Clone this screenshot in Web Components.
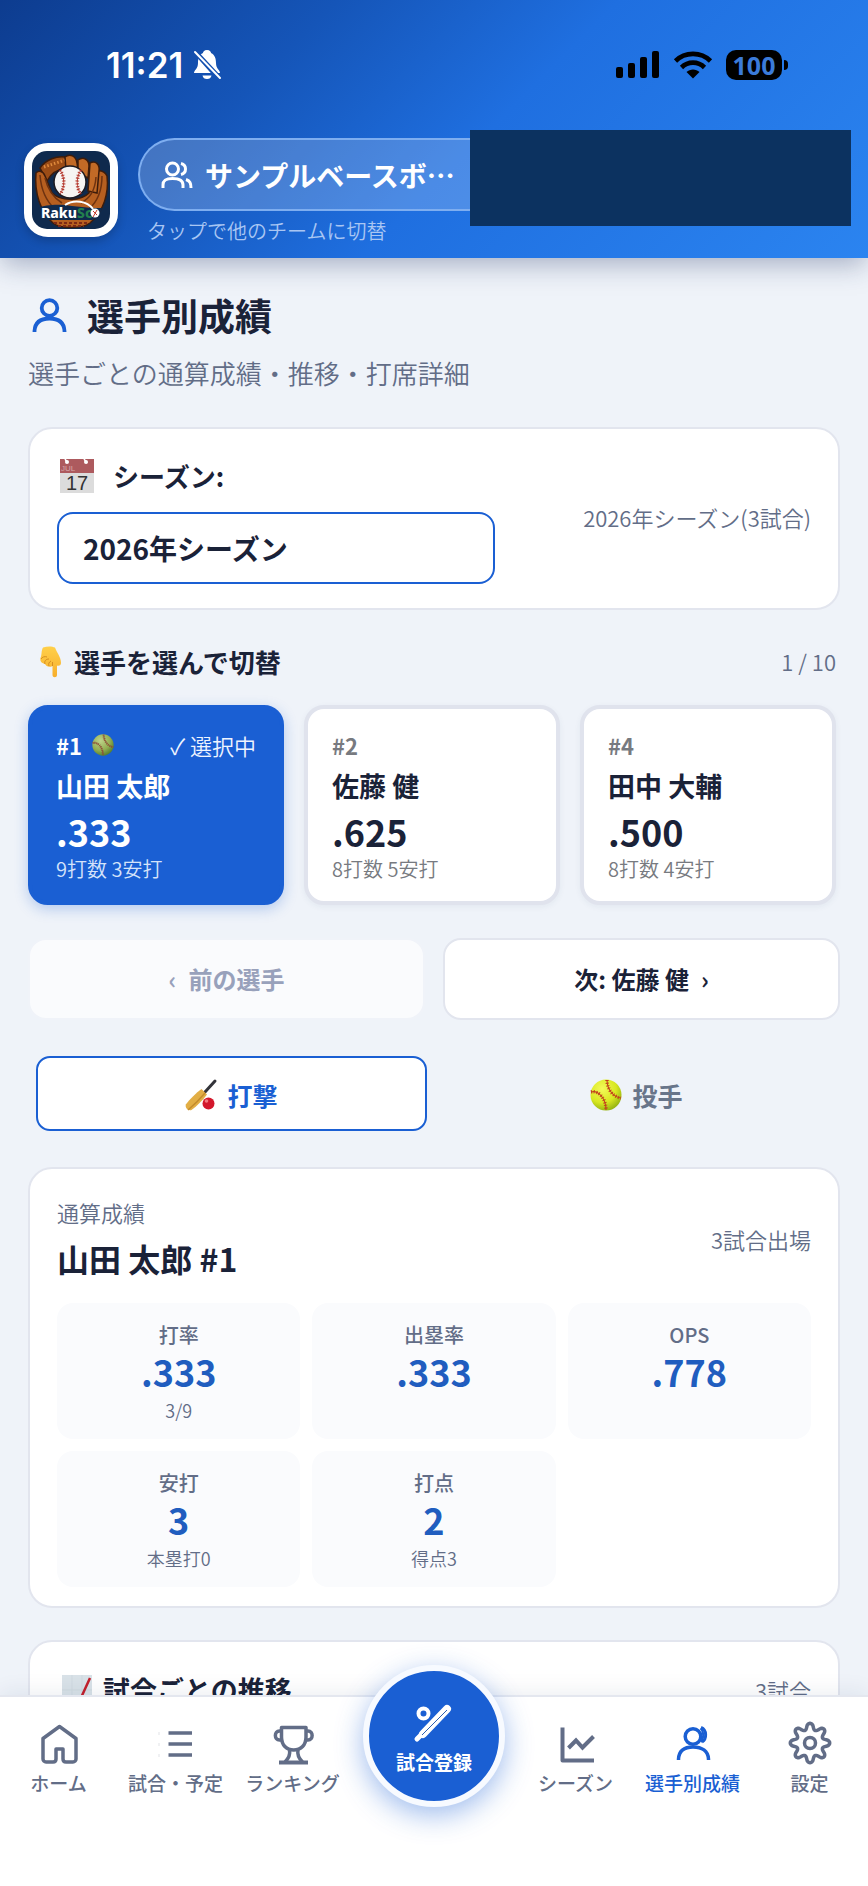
<!DOCTYPE html>
<html lang="ja">
<head>
<meta charset="utf-8">
<meta name="viewport" content="width=device-width, initial-scale=1">
<title>選手別成績</title>
<style>
  :root {
    --blue: #1a5fd3;
    --ink: #1a2238;
    --muted: #626d87;
    --line: #e2e5ee;
    --page: #eff3f9;
  }
  html, body { height: 100%; margin: 0; }
  body {
    background: var(--page);
    color: var(--ink);
    font-family: "Noto Sans CJK JP", "Noto Sans", sans-serif;
    font-weight: 350;
  }
</style>
</head>
<body>
<app-shell>
  <app-header slot="header" team="サンプルベースボ…" hint="タップで他のチームに切替"></app-header>
  <page-title icon="user" heading="選手別成績">選手ごとの通算成績・推移・打席詳細</page-title>
  <season-card note="2026年シーズン(3試合)"></season-card>
  <section-head icon="point" count="1 / 10">選手を選んで切替</section-head>
  <player-list>
    <player-card number="#1" name="山田 太郎" avg=".333" detail="9打数 3安打" selected></player-card>
    <player-card number="#2" name="佐藤 健" avg=".625" detail="8打数 5安打"></player-card>
    <player-card number="#4" name="田中 大輔" avg=".500" detail="8打数 4安打"></player-card>
  </player-list>
  <player-pager prev="前の選手" next="次: 佐藤 健"></player-pager>
  <mode-tabs></mode-tabs>
  <stats-card heading="山田 太郎 #1" label="通算成績" note="3試合出場">
    <stat-tile label="打率" value=".333" sub="3/9"></stat-tile>
    <stat-tile label="出塁率" value=".333"></stat-tile>
    <stat-tile label="OPS" value=".778"></stat-tile>
    <stat-tile label="安打" value="3" sub="本塁打0"></stat-tile>
    <stat-tile label="打点" value="2" sub="得点3"></stat-tile>
  </stats-card>
  <trend-card note="3試合">試合ごとの推移</trend-card>
  <app-nav slot="nav">
    <nav-item icon="home">ホーム</nav-item>
    <nav-item icon="list">試合・予定</nav-item>
    <nav-item icon="trophy">ランキング</nav-item>
    <nav-action icon="bat">試合登録</nav-action>
    <nav-item icon="chart">シーズン</nav-item>
    <nav-item icon="userActive" active>選手別成績</nav-item>
    <nav-item icon="gear">設定</nav-item>
  </app-nav>
</app-shell>

<script>
const gearPath = (() => {
  const points = [];
  for (let i = 0; i < 160; i++) {
    const t = i / 160 * Math.PI * 2;
    const wave = Math.cos(8 * t);
    const r = 16.6 + 3.1 * Math.sign(wave) * Math.pow(Math.abs(wave), .7);
    points.push((22 + r * Math.sin(t)).toFixed(1) + ' ' + (22 - r * Math.cos(t)).toFixed(1));
  }
  return 'M' + points.join('L') + 'Z';
})();

const line = (body, width = 3.5) =>
  `<g fill="none" stroke="currentColor" stroke-width="${width}" stroke-linejoin="round">${body}</g>`;

const ballArt = (light, mid, dark, seam) => `
  <defs><radialGradient id="b" cx=".38" cy=".3" r=".75"><stop offset="0" stop-color="${light}"/><stop offset=".6" stop-color="${mid}"/><stop offset="1" stop-color="${dark}"/></radialGradient></defs>
  <circle cx="16" cy="16" r="15.5" fill="url(#b)"/>
  <g fill="none" stroke="${seam}" stroke-width="1.1"><path d="M1 13C8 11 16 19 16 31"/><path d="M17 1C17 10 23 18 31 19"/></g>
  <g fill="none" stroke="${seam}" stroke-width="3.4" stroke-dasharray="1 1.7"><path d="M1 13C8 11 16 19 16 31"/><path d="M17 1C17 10 23 18 31 19"/></g>`;

const ICONS = {
  home: ['0 0 44 44', line('<path d="M22.5 5.5 6 17.5V38a3 3 0 0 0 3 3h7q3 0 3-3V28h7v10q0 3 3 3h7a3 3 0 0 0 3-3V17.5Z"/>')],
  list: ['0 0 44 44', line('<path d="M14.500 12H38M14.500 23H38M14.500 34H38"/><path d="M5 11v3M5 22v3M5 33v3" stroke-width="1" opacity=".2"/>')],
  trophy: ['0 0 44 44', line('<path d="M10.500 6.500H35V16C35 24 30 29 22.700 29S10.500 24 10.500 16Z"/><path d="M10.500 10H8.500C3 10 3 19 8.500 19h3M35 10h2C42.500 10 42.500 19 37 19h-3"/><path d="M18.500 29C19.500 34 18 37 14 41M27 29C26 34 27.500 37 31.500 41"/><path d="M8 41.500H37" stroke-width="4"/>')],
  chart: ['0 0 44 44', line('<path d="M8.500 6.500V39.500H40"/><path d="M14.500 27 22 19.500 28.500 26.500 39.500 15.500" stroke-linejoin="miter" stroke-width="4"/>', 4)],
  user: ['0 0 44 44', line('<circle cx="21.500" cy="15" r="7.800"/><path d="M6.500 39V38C7 30 12 25.500 21.500 25.500S36 30 36.500 38V39"/>', 3.8)],
  userActive: ['0 0 44 44', line('<circle cx="22" cy="15.500" r="7.800"/><path d="M7.500 39V38C8 30 13 26 22 26S37 30 37.500 38V39"/><path d="M30 6.500C36 9 36 18 31 21" stroke-width="3"/><path d="M29.500 7.500C33 10 33 18 30 21" stroke-width="2"/>')],
  gear: ['0 0 44 44', line(`<path d="${gearPath}"/><circle cx="22" cy="22" r="5.500"/>`)],
  bat: ['0 0 44 44', '<circle cx="11.500" cy="11.500" r="5" fill="none" stroke="currentColor" stroke-width="4"/><path d="M35 7 11 32" stroke="currentColor" stroke-width="8" stroke-linecap="round"/><path d="M12 30 5 37" stroke="currentColor" stroke-width="5" stroke-linecap="round"/><path d="M35 8 10 33" stroke="#2a5db0" stroke-width="1"/>'],
  team: ['0 0 32 28', line('<circle cx="11.500" cy="8" r="6"/><path d="M2 27V24C2 18.500 6 17.500 11.500 17.500S22 18.500 22 24V27"/><path d="M20 2.500C26 4 26 12 20 13.500M25 18.500C29 20 30 22 30 27"/>', 3)],
  belloff: ['0 0 28 30', '<defs><clipPath id="c"><path d="M4 0H28V26L0 -4ZM0 3 24 30H0Z"/></clipPath></defs><g fill="currentColor" clip-path="url(#c)"><path d="M14 0C17 0 18 2 18 3C22 5 23 9 23 13C23 19 27 20 27 23H1C1 20 5 19 5 13C5 9 6 5 10 3C10 2 11 0 14 0Z"/></g><path d="M9.500 25.500H18.500C18 28 16.500 29 14 29S10 28 9.500 25.500Z" fill="currentColor"/><path d="M2 2 27 28" stroke="currentColor" stroke-width="2" stroke-linecap="round"/>'],
  signal: ['0 0 44 28', '<g fill="currentColor"><rect y="16" width="7" height="11" rx="2"/><rect x="12" y="12" width="7" height="15" rx="2"/><rect x="24" y="6" width="7" height="21" rx="2"/><rect x="36" width="7" height="27" rx="2"/></g>'],
  wifi: ['0 0 38 28', '<g fill="none" stroke="currentColor" stroke-width="4.600"><path d="M1.500 10C11 .5 27 .5 36.500 10"/><path d="M7.500 16.500C14 10 24 10 30.500 16.500"/></g><path d="M12.500 21C16 17.500 22 17.500 25.500 21L19 27.500Z" fill="currentColor"/>'],
  calendar: ['0 0 34 34', '<rect width="34" height="34" fill="#dcdcdc"/><rect width="34" height="14" fill="#ad5a5e"/><circle cx="7" cy="3" r="2" fill="#fff"/><circle cx="26" cy="3" r="2" fill="#fff"/><path d="M5 0 7 3M24 0 27 4" stroke="#fff" stroke-width="1.500"/><g font-weight="400" font-family="Liberation Sans, sans-serif"><text x="1" y="12" font-size="8" fill="#d8a6a8">JUL</text><text x="17" y="31" text-anchor="middle" font-size="20" fill="#333">17</text></g>'],
  point: ['0 0 22 32', '<defs><linearGradient id="h" x2="0" y2="1"><stop stop-color="#ffd04a"/><stop offset="1" stop-color="#f7ae2c"/></linearGradient></defs><path d="M3 1.500C7 0 12 0 15 1.500C17 7 21 11 21 17C21 20 18 20 17 19.500V29C17 32 12.500 32 12.500 29V20C9 22 6 20 5 18C1 17 0 15 .5 12C2 9 1 5 3 1.500Z" fill="url(#h)"/><path d="M12.500 20V16M9 20C8 18 9 16 11 15M5 18C4 15 6 13 9 13M1 13C2 11 5 10 7 11" fill="none" stroke="#d68f22" stroke-width="1"/>'],
  ball: ['0 0 32 32', ballArt('#f4f95a', '#d8e821', '#8fae10', '#c2401d')],
  ballDim: ['0 0 32 32', ballArt('#bfd38a', '#93ae52', '#4f7a2b', '#8e4a36')],
  batting: ['0 0 32 32', '<path d="M30 2 20 13" stroke="#33343a" stroke-width="3" stroke-linecap="round"/><path d="M16.500 10 22 15.500C18 21 12 27 6.500 31C3 32 0 29 .8 25.500C5 20 11 14 16.500 10Z" fill="#e2ae45"/><path d="M20 14C15 20 9 26 3 31" stroke="#c48c2c" stroke-width="1.500" fill="none"/><circle cx="23.500" cy="24.500" r="6" fill="#d3182c"/><circle cx="21.500" cy="22" r="1.800" fill="#f27a80"/>'],
  trend: ['0 0 30 30', '<rect width="30" height="30" fill="#d9e2e8"/><path d="M0 15H30M0 24H30M10 0V30M20 0V30" stroke="#cfd9e0"/><path d="M2 29 10 23 18 25 28 3" stroke="#c3202c" stroke-width="2.500" fill="none"/>'],
  logo: ['0 0 78 78', `<rect width="78" height="78" rx="15" fill="#0f2a4d"/>
    <path d="M8 17C14 8 25 5 33 6L35 17C27 18 19 22 15 30Z" fill="#9b4c16" stroke="#3d1c0b" stroke-width="1.500"/>
    <path d="M12 16 33 9" stroke="#e08a3c" stroke-width="3" stroke-dasharray="1.500 2"/>
    <path d="M4 22C7 19 11 20 13 25L20 42C28 50 48 51 57 42L59 25C61 18 72 18 75 25C77 42 72 60 58 72C50 78 28 78 21 72C9 62 2 42 4 22Z" fill="#b65f20" stroke="#3d1c0b" stroke-width="1.500"/>
    <path d="M33 6C38 2 44 5 45 12L46 19H34ZM46 9C52 5 57 9 57 15L56 27 46 22ZM58 12C64 9 68 14 67 20L65 42 56 40Z" fill="#c26a26" stroke="#3d1c0b" stroke-width="1.500"/>
    <path d="M8 24C9 38 14 50 23 58M70 25C70 40 66 50 57 58M13 27C16 40 22 47 30 52M64 26C63 40 58 47 49 52" fill="none" stroke="#6e3210" stroke-width="1.500"/>
    <path d="M6 57C14 53 30 53 40 55L60 57 70 57C68 64 64 68 60 69L14 69C10 66 8 62 6 57Z" fill="#0f2a4d"/>
    <path d="M22 72H56M26 75H52" stroke="#7d2a16" stroke-width="2" stroke-dasharray="3 2"/>
    <circle cx="38" cy="31" r="16" fill="#f6f4f2" stroke="#1c1a20" stroke-width="1.500"/>
    <path d="M28 19C33 26 33 37 28 43M49 19C44 26 44 37 49 43" fill="none" stroke="#b5382e" stroke-width="1"/>
    <path d="M28 19C33 26 33 37 28 43M49 19C44 26 44 37 49 43" fill="none" stroke="#b5382e" stroke-width="3.500" stroke-dasharray="1 1.800"/>
    <path d="M33 54C42 48 55 50 61 58" fill="none" stroke="#fff" stroke-width="2"/>
    <text x="9" y="67" font-size="14" font-weight="800" fill="#fff" font-family="Noto Sans, sans-serif">Raku<tspan fill="#22804d">Sc</tspan></text>
    <circle cx="63" cy="62" r="4.500" fill="#fff"/><path d="M61 60 65 64M65 59 61 66" stroke="#c0392b" stroke-width="1"/>`]
};

const escapeText = s => (s || '').replace(/[&<>]/g, c => ({'&': '&amp;', '<': '&lt;', '>': '&gt;'}[c]));

/* Base class: subclasses supply css() and html(). */
class Base extends HTMLElement {
  constructor() {
    super();
    this.attachShadow({ mode: 'open' });
  }
  connectedCallback() {
    this.shadowRoot.innerHTML = `<style>
      *, :host { box-sizing: border-box; }
      h1, h2, p, dl, dt, dd { margin: 0; }
      button, select { font: inherit; color: inherit; margin: 0; }
      button { cursor: pointer; }
      ${this.css()}</style>${this.html()}`;
  }
  text(name) { return escapeText(this.getAttribute(name)); }
}

customElements.define('ui-icon', class extends Base {
  css() { return ':host{display:block;flex:none;width:44px;height:44px} svg{display:block;width:100%;height:100%;overflow:visible}'; }
  html() {
    const [box, body] = ICONS[this.getAttribute('name')];
    return `<svg viewBox="${box}" aria-hidden="true">${body}</svg>`;
  }
});

customElements.define('app-shell', class extends Base {
  css() { return `
    :host{display:flex;flex-direction:column;height:100vh;overflow:hidden}
    main{flex:1;min-height:0;overflow-y:auto;scrollbar-width:none;padding:33px 28px 40px}
    main::-webkit-scrollbar{display:none}
    header{position:relative;z-index:1}
    footer{position:relative;z-index:1}`; }
  html() { return '<header><slot name="header"></slot></header><main><slot></slot></main><footer><slot name="nav"></slot></footer>'; }
});

customElements.define('app-header', class extends Base {
  css() { return `
    :host{display:block;padding-bottom:8px;color:#fff;
      background:linear-gradient(135deg,#0d3c8f 0%,#1555b8 30%,#1f6fe0 55%,#2b84f0 100%);
      box-shadow:0 8px 26px -2px rgba(30,50,100,.36)}
    .status{display:flex;align-items:center;height:130px;padding:0 80px 0 106px}
    .time{font:600 35px/40px Inter,sans-serif;margin-right:10px}
    .bell{width:28px;height:30px}
    .right{display:flex;align-items:center;gap:14px;margin-left:auto;color:#000}
    .signal{width:44px;height:28px}
    .wifi{width:38px;height:28px}
    .battery{display:flex;align-items:center;gap:2px}
    .level{width:56px;height:30px;border-radius:10px;background:#000;color:#3b7bd9;text-align:center;font:700 25px/30px "Noto Sans",sans-serif}
    .nub{width:4px;height:10px;border-radius:0 4px 4px 0;background:#000}
    .row{display:flex;align-items:flex-start;height:120px;padding:0 17px 0 24px}
    .logo{width:94px;height:94px;border:8px solid #fff;border-radius:24px;background:#fff;margin:13px 20px 0 0;box-shadow:0 4px 10px rgba(0,0,0,.2)}
    .team{width:332px;flex:none;margin-top:8px}
    .pill{display:flex;align-items:center;gap:12px;width:100%;height:73px;padding:0 0 0 21px;
      border:2px solid #7eaef0;border-right:0;border-radius:37px 0 0 37px;background:rgba(255,255,255,.2);
      font-weight:700;font-size:28px;line-height:40px;white-space:nowrap;overflow:hidden}
    .pill ui-icon{width:32px;height:28px}
    .hint{margin-top:5px;padding-left:9px;font-size:20px;line-height:30px;color:#a9c6f3}
    .panel{flex:1;height:96px;background:#0c3260}`; }
  html() { return `
    <div class="status">
      <span class="time">11:21</span><ui-icon class="bell" name="belloff"></ui-icon>
      <div class="right"><ui-icon class="signal" name="signal"></ui-icon><ui-icon class="wifi" name="wifi"></ui-icon>
        <div class="battery"><div class="level">100</div><div class="nub"></div></div></div>
    </div>
    <div class="row">
      <ui-icon class="logo" name="logo"></ui-icon>
      <div class="team">
        <button class="pill" type="button"><ui-icon name="team"></ui-icon><span>${this.text('team')}</span></button>
        <p class="hint">${this.text('hint')}</p>
      </div>
      <div class="panel"></div>
    </div>`; }
});

customElements.define('page-title', class extends Base {
  css() { return `
    :host{display:block}
    .head{display:flex;align-items:center;gap:15px;height:48px}
    ui-icon{width:44px;height:44px;color:var(--blue)}
    h1{font-size:37px;line-height:48px;font-weight:700}
    p{margin-top:16px;font-size:26px;line-height:36px;color:var(--muted)}`; }
  html() { return `<div class="head"><ui-icon name="${this.text('icon')}"></ui-icon><h1>${this.text('heading')}</h1></div><p><slot></slot></p>`; }
});

customElements.define('season-card', class extends Base {
  css() { return `
    :host{display:flex;align-items:center;justify-content:space-between;margin-top:36px;padding:29px 27px 24px;
      background:#fff;border:2px solid var(--line);border-radius:24px}
    label{display:flex;align-items:center;gap:19px;height:36px;font-size:26px;line-height:36px;font-weight:700}
    label ui-icon{width:34px;height:34px;margin-left:3px}
    select{display:block;appearance:none;width:438px;height:72px;margin-top:18px;padding:0 24px;
      border:2px solid var(--blue);border-radius:16px;background:#fff;font-size:28px;font-weight:700}
    p{padding-bottom:8px;font-size:22px;line-height:32px;color:var(--muted)}`; }
  html() { return `<div><label for="season"><ui-icon name="calendar"></ui-icon>シーズン:</label>
    <select id="season"><option>2026年シーズン</option></select></div><p>${this.text('note')}</p>`; }
});

customElements.define('section-head', class extends Base {
  css() { return `
    :host{display:flex;align-items:center;justify-content:space-between;margin:32px 0 23px;padding:0 4px 0 12px}
    h2{display:flex;align-items:center;gap:12px;font-size:26px;line-height:40px;font-weight:700}
    ui-icon{width:22px;height:32px}
    span{padding-bottom:2px;font-size:22px;line-height:32px;color:var(--muted)}`; }
  html() { return `<h2><ui-icon name="${this.text('icon')}"></ui-icon><slot></slot></h2><span>${this.text('count')}</span>`; }
});

customElements.define('player-list', class extends Base {
  css() { return ':host{display:grid;grid-template-columns:repeat(3,1fr);gap:20px;padding-right:4px}'; }
  html() { return '<slot></slot>'; }
});

customElements.define('player-card', class extends Base {
  css() { return `
    :host{display:block;color:var(--ink)}
    button{display:block;width:100%;height:200px;padding:19px 24px 15px;text-align:left;
      background:#fff;border:4px solid #e0e3ed;border-radius:20px;box-shadow:0 2px 6px rgba(40,60,110,.06)}
    .top{display:flex;align-items:center;height:34px;font-size:22px;line-height:34px;color:#777a80}
    b{font-weight:700}
    ui-icon{width:22px;height:22px;margin-left:10px}
    .tag{margin-left:auto;color:#eef4ff}
    .name{display:block;font-size:27px;line-height:48px;font-weight:700}
    .avg{display:block;font-size:36px;line-height:42px;font-weight:700}
    .detail{display:block;font-size:20px;line-height:34px;color:#777a80}
    :host([selected]) button{background:var(--blue);border-color:var(--blue);color:#fff;box-shadow:0 4px 14px rgba(26,95,211,.28)}
    :host([selected]) .top{color:#fff}
    :host([selected]) .detail{color:#d5e3fa}`; }
  html() {
    const on = this.hasAttribute('selected');
    return `<button type="button" aria-pressed="${on}">
      <span class="top"><b>${this.text('number')}</b>${on ? '<ui-icon name="ballDim"></ui-icon><span class="tag">✓ 選択中</span>' : ''}</span>
      <span class="name">${this.text('name')}</span><span class="avg">${this.text('avg')}</span><span class="detail">${this.text('detail')}</span>
    </button>`;
  }
});

customElements.define('player-pager', class extends Base {
  css() { return `
    :host{display:grid;grid-template-columns:1fr 1fr;gap:18px;margin-top:33px}
    button{height:82px;border:2px solid var(--line);border-radius:18px;background:#fff;font-size:24px;line-height:36px;font-weight:700;display:flex;align-items:center;justify-content:center;gap:12px}
    button:disabled{color:#98a1bb;background:#fafbfd;border-color:#f0f3f9}`; }
  html() { return `<button type="button" disabled><span>‹</span><span>${this.text('prev')}</span></button>
    <button type="button"><span>${this.text('next')}</span><span>›</span></button>`; }
});

customElements.define('mode-tabs', class extends Base {
  css() { return `
    :host{display:grid;grid-template-columns:1fr 1fr;gap:14px;margin-top:36px;padding:0 8px}
    button{display:flex;align-items:center;justify-content:center;gap:10px;height:75px;padding:3px 6px 0;border:2px solid transparent;border-radius:14px;background:none;
      font-size:25px;line-height:36px;font-weight:700;color:#68758a}
    button[aria-selected=true]{background:#fff;border-color:var(--blue);color:var(--blue)}
    ui-icon{width:32px;height:32px}`; }
  html() { return `<button type="button" role="tab" aria-selected="true"><ui-icon name="batting"></ui-icon>打撃</button>
    <button type="button" role="tab" aria-selected="false"><ui-icon name="ball"></ui-icon>投手</button>`; }
});

customElements.define('stats-card', class extends Base {
  css() { return `
    :host{display:block;margin-top:36px;padding:27px 27px 19px;background:#fff;border:2px solid var(--line);border-radius:24px}
    .head{display:flex;align-items:center;justify-content:space-between;margin-bottom:15px}
    p{font-size:22px;line-height:32px;color:var(--muted)}
    .note{padding-bottom:6px}
    h2{font-size:32px;line-height:60px;font-weight:700}
    .grid{display:grid;grid-template-columns:repeat(3,1fr);gap:12px}`; }
  html() { return `<div class="head"><div><p>${this.text('label')}</p><h2>${this.text('heading')}</h2></div><p class="note">${this.text('note')}</p></div>
    <div class="grid"><slot></slot></div>`; }
});

customElements.define('stat-tile', class extends Base {
  css() { return `
    :host{display:block;min-height:136px;padding:18px 8px 10px;border-radius:16px;background:#fafbfd;text-align:center;color:var(--muted)}
    dt{font-size:20px;line-height:28px;font-weight:500}
    .value{font-size:36px;line-height:44px;font-weight:700;color:#205dbf}
    .sub{font-size:18px;line-height:34px}`; }
  html() {
    const sub = this.text('sub');
    return `<dl><dt>${this.text('label')}</dt><dd class="value">${this.text('value')}</dd>${sub ? `<dd class="sub">${sub}</dd>` : ''}</dl>`;
  }
});

customElements.define('trend-card', class extends Base {
  css() { return `
    :host{display:block;min-height:240px;margin-top:32px;padding:28px 27px;background:#fff;border:2px solid var(--line);border-radius:24px}
    .head{display:flex;align-items:center;justify-content:space-between}
    h2{display:flex;align-items:center;gap:11px;font-size:27px;line-height:40px;font-weight:700}
    ui-icon{width:30px;height:30px;margin-left:5px}
    p{font-size:22px;line-height:40px;color:var(--muted)}`; }
  html() { return `<div class="head"><h2><ui-icon name="trend"></ui-icon><slot></slot></h2><p>${this.text('note')}</p></div>`; }
});

customElements.define('app-nav', class extends Base {
  css() { return `
    :host{display:block;background:#fff;border-top:2px solid #e4e7ef;box-shadow:0 -4px 20px rgba(20,40,90,.07)}
    nav{display:grid;grid-template-columns:repeat(3,1fr) 166px repeat(3,1fr);height:189px}`; }
  html() { return '<nav><slot></slot></nav>'; }
});

customElements.define('nav-item', class extends Base {
  css() { return `
    :host{display:block;color:var(--muted)}
    :host([active]){color:var(--blue)}
    a{display:flex;flex-direction:column;align-items:center;gap:4px;padding-top:24px;color:inherit;text-decoration:none;
      font-size:19px;line-height:28px;font-weight:500;white-space:nowrap}`; }
  html() { return `<a href="#"><ui-icon name="${this.text('icon')}"></ui-icon><span><slot></slot></span></a>`; }
});

customElements.define('nav-action', class extends Base {
  css() { return `
    :host{display:block;justify-self:center;margin-top:-32px;height:142px}
    button{display:flex;flex-direction:column;align-items:center;gap:2px;width:142px;height:142px;padding:31px 0 0;
      border:6px solid #f7faff;border-radius:50%;background:var(--blue);color:#fff;
      font-size:19px;line-height:28px;font-weight:700;box-shadow:0 8px 28px rgba(26,95,211,.42)}`; }
  html() { return `<button type="button"><ui-icon name="${this.text('icon')}"></ui-icon><span><slot></slot></span></button>`; }
});
</script>
</body>
</html>
